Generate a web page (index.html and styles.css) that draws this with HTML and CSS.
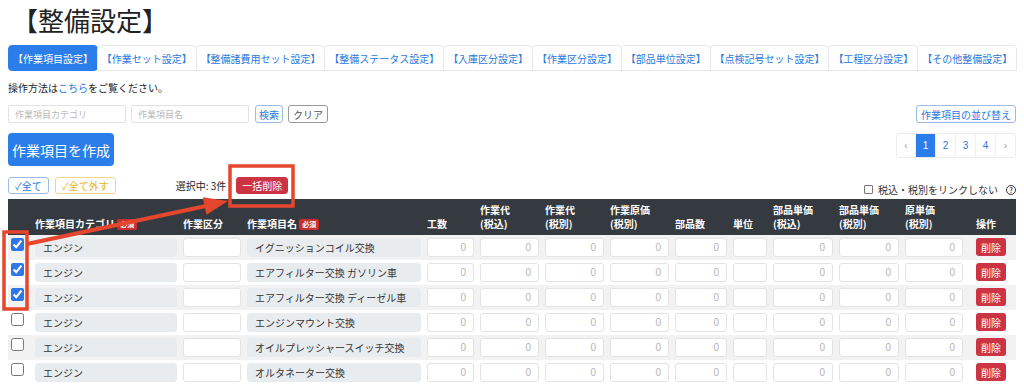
FILE: index.html
```html
<!DOCTYPE html>
<html lang="ja">
<head>
  <meta charset="UTF-8">
  <meta name="viewport" content="width=device-width, initial-scale=1.0">
  <title>整備設定</title>
  <link rel="stylesheet" href="styles.css">
</head>
<body>

  <h1 class="page-title">【整備設定】</h1>

  <nav class="tabs">
    <a href="#" class="tab active">【作業項目設定】</a>
    <a href="#" class="tab">【作業セット設定】</a>
    <a href="#" class="tab">【整備諸費用セット設定】</a>
    <a href="#" class="tab">【整備ステータス設定】</a>
    <a href="#" class="tab">【入庫区分設定】</a>
    <a href="#" class="tab">【作業区分設定】</a>
    <a href="#" class="tab">【部品単位設定】</a>
    <a href="#" class="tab">【点検記号セット設定】</a>
    <a href="#" class="tab">【工程区分設定】</a>
    <a href="#" class="tab">【その他整備設定】</a>
  </nav>

  <p class="help">操作方法は<a href="#">こちら</a>をご覧ください。</p>

  <div class="search-row">
    <div class="search-left">
      <input class="search-input" type="text" placeholder="作業項目カテゴリ">
      <input class="search-input" type="text" placeholder="作業項目名">
      <button class="btn btn-outline-blue">検索</button>
      <button class="btn btn-outline-gray">クリア</button>
    </div>
    <button class="btn btn-outline-blue">作業項目の並び替え</button>
  </div>

  <div class="create-row">
    <button class="btn-create">作業項目を作成</button>
    <ul class="pagination">
      <li>‹</li>
      <li class="current">1</li>
      <li>2</li>
      <li>3</li>
      <li>4</li>
      <li>›</li>
    </ul>
  </div>

  <div class="select-row">
    <div class="select-left">
      <button class="btn btn-outline-blue wide">✓全て</button>
      <button class="btn btn-outline-yellow wide">✓全て外す</button>
      <span class="selected-count">選択中: 3件</span>
      <button class="btn btn-red">一括削除</button>
    </div>
    <label class="link-toggle">
      <span class="small-box"></span>税込・税別をリンクしない
      <span class="help-icon">?</span>
    </label>
  </div>

  <table class="items">
    <colgroup>
      <col style="width:24px"><col style="width:148px"><col style="width:64px">
      <col style="width:180px"><col style="width:53px"><col style="width:65px">
      <col style="width:65px"><col style="width:65px"><col style="width:58px">
      <col style="width:40px"><col style="width:66px"><col style="width:66px">
      <col style="width:64px"><col style="width:50px">
    </colgroup>
    <thead>
      <tr>
        <th></th>
        <th>作業項目カテゴリ <span class="badge">必須</span></th>
        <th>作業区分</th>
        <th>作業項目名 <span class="badge">必須</span></th>
        <th>工数</th>
        <th>作業代<br>(税込)</th>
        <th>作業代<br>(税別)</th>
        <th>作業原価<br>(税別)</th>
        <th>部品数</th>
        <th>単位</th>
        <th>部品単価<br>(税込)</th>
        <th>部品単価<br>(税別)</th>
        <th>原単価<br>(税別)</th>
        <th class="ops">操作</th>
      </tr>
    </thead>
    <tbody id="item-rows"></tbody>
  </table>

  <!-- annotation overlay -->
  <svg class="annotation" width="1024" height="387" viewBox="0 0 1024 387">
    <rect x="230" y="166" width="63" height="40" fill="none" stroke="#e5462d" stroke-width="3.5"/>
    <rect x="4" y="232" width="23" height="77" fill="none" stroke="#e5462d" stroke-width="3.5"/>
    <line x1="27" y1="244" x2="206" y2="206" stroke="#e5462d" stroke-width="4"/>
    <polygon points="228,201 206.5,214.8 202.7,197.2" fill="#e5462d"/>
  </svg>

  <script>
    const items = [
      { category: 'エンジン', name: 'イグニッションコイル交換', checked: true },
      { category: 'エンジン', name: 'エアフィルター交換 ガソリン車', checked: true },
      { category: 'エンジン', name: 'エアフィルター交換 ディーゼル車', checked: true },
      { category: 'エンジン', name: 'エンジンマウント交換', checked: false },
      { category: 'エンジン', name: 'オイルプレッシャースイッチ交換', checked: false },
      { category: 'エンジン', name: 'オルタネーター交換', checked: false }
    ];

    function renderRows() {
      const tbody = document.getElementById('item-rows');
      const num = '<td><input class="cell-input num" type="text" value="0"></td>';
      items.forEach(item => {
        const tr = document.createElement('tr');
        tr.innerHTML =
          `<td><input class="row-check" type="checkbox" ${item.checked ? 'checked' : ''}></td>` +
          `<td><input class="cell-input readonly" type="text" value="${item.category}" readonly></td>` +
          `<td><input class="cell-input" type="text"></td>` +
          `<td><input class="cell-input readonly" type="text" value="${item.name}" readonly></td>` +
          num + num + num + num + num +
          `<td><input class="cell-input" type="text"></td>` +
          num + num + num +
          `<td class="ops"><button class="btn-delete">削除</button></td>`;
        tbody.appendChild(tr);
      });
    }

    renderRows();
  </script>

</body>
</html>
```

FILE: styles.css
```css
* {
  margin: 0;
  padding: 0;
  box-sizing: border-box;
}

body {
  position: relative;
  padding: 4px 8px 0;
  font-family: 'Liberation Sans', 'Noto Sans CJK JP', sans-serif;
  font-size: 10px;
  color: #212529;
  background: #fff;
  overflow: hidden;
}

a {
  color: #2878e0;
  text-decoration: none;
}

.page-title {
  font-family: 'Noto Sans CJK JP', sans-serif;
  font-size: 26px;
  font-weight: normal;
  line-height: 32px;
  padding-left: 4px;
  color: #222;
}

/* tabs */
.tabs {
  display: flex;
  margin-top: 9px;
  height: 26px;
}

.tab {
  display: flex;
  align-items: center;
  padding: 0 4px;
  font-family: 'Noto Sans CJK JP', sans-serif;
  font-size: 10px;
  color: #2878e0;
  border: 1px solid #e8e8e8;
  border-radius: 4px 4px 0 0;
  margin-right: -1px;
}

.tab.active {
  background-color: #2b7de9;
  border-color: #2b7de9;
  color: #fff;
  border-radius: 4px;
}

.help {
  margin-top: 10px;
  line-height: 14px;
  font-family: 'Noto Sans CJK JP', sans-serif;
}

/* buttons */
.btn {
  height: 18px;
  padding: 0 4px;
  font-family: 'Noto Sans CJK JP', sans-serif;
  font-size: 10px;
  background: #fff;
  border: 1px solid;
  border-radius: 3px;
  cursor: pointer;
}

.btn.wide {
  padding: 0 6px;
}

.btn-outline-blue {
  color: #2878e0;
  border-color: #9cbbe6;
}

.btn-outline-gray {
  color: #555;
  border-color: #999;
}

.btn-outline-yellow {
  color: #e8b320;
  border-color: #f1d68a;
}

.btn-red {
  color: #fff;
  background-color: #cc3443;
  border-color: #cc3443;
  height: 17px;
  padding: 0 5px;
}

/* search */
.search-row {
  display: flex;
  justify-content: space-between;
  align-items: center;
  margin-top: 10px;
}

.search-left {
  display: flex;
  gap: 5px;
  align-items: center;
}

.search-input {
  width: 118px;
  height: 18px;
  padding: 0 6px;
  border: 1px solid #e2e2e2;
  border-radius: 2px;
  font-family: 'Noto Sans CJK JP', sans-serif;
  font-size: 9px;
}

.search-input::placeholder {
  color: #b9b9b9;
}

.search-left .btn-outline-blue {
  margin-left: 1px;
  padding: 0 3px;
}

/* create + paging */
.create-row {
  display: flex;
  justify-content: space-between;
  align-items: flex-start;
  margin-top: 10px;
}

.btn-create {
  width: 106px;
  height: 33px;
  background-color: #2b7de9;
  color: #fff;
  border: none;
  border-radius: 4px;
  font-family: 'Noto Sans CJK JP', sans-serif;
  font-size: 14px;
}

.pagination {
  display: flex;
  list-style: none;
  border: 1px solid #ececec;
  border-radius: 3px;
}

.pagination li {
  width: 20px;
  height: 23px;
  line-height: 23px;
  text-align: center;
  color: #2878e0;
  font-size: 10px;
  border-left: 1px solid #f0f0f0;
}

.pagination li:first-child {
  border-left: none;
  color: #999;
  width: 18px;
}

.pagination li:last-child {
  color: #999;
}

.pagination li.current {
  background-color: #2b7de9;
  color: #fff;
}

/* select row */
.select-row {
  display: flex;
  justify-content: space-between;
  align-items: center;
  margin-top: 11px;
  height: 17px;
}

.select-left {
  display: flex;
  align-items: center;
  gap: 6px;
}

.select-left .btn {
  height: 17px;
}

.selected-count {
  margin-left: 54px;
  margin-right: 4px;
  font-family: 'Noto Sans CJK JP', sans-serif;
}

.link-toggle {
  display: flex;
  align-items: center;
  gap: 3px;
  font-family: 'Noto Sans CJK JP', sans-serif;
  padding-top: 8px;
  color: #333;
}

.small-box {
  width: 9px;
  height: 9px;
  border: 1px solid #777;
  border-radius: 1px;
  margin-right: 2px;
}

.help-icon {
  width: 10px;
  height: 10px;
  margin-left: 5px;
  border: 1px solid #333;
  border-radius: 50%;
  font-size: 7px;
  font-weight: bold;
  line-height: 8px;
  text-align: center;
}

/* table */
.items {
  width: 1008px;
  margin-top: 5px;
  table-layout: fixed;
  border-collapse: collapse;
  font-family: 'Noto Sans CJK JP', sans-serif;
}

.items th {
  height: 36px;
  padding: 0 3px 4px;
  background-color: #343a40;
  color: #fff;
  font-size: 10px;
  font-weight: bold;
  line-height: 14px;
  text-align: left;
  vertical-align: bottom;
  white-space: nowrap;
}

.items th.ops,
.items td.ops {
  padding-left: 10px;
}

.badge {
  display: inline-block;
  padding: 0 3px;
  background-color: #c9302c;
  color: #fff;
  font-size: 7px;
  line-height: 11px;
  border-radius: 2px;
  vertical-align: 1px;
}

.items td {
  padding: 3px;
  height: 25px;
  vertical-align: top;
}

.items tbody tr:nth-child(odd) td {
  background-color: #f2f2f2;
}

.row-check {
  display: block;
  width: 13px;
  height: 13px;
  margin: 0;
  accent-color: #2f76e8;
}

.cell-input {
  display: block;
  width: 100%;
  height: 19px;
  padding: 0 7px;
  border: 1px solid #e3e3e3;
  border-radius: 3px;
  background: #fff;
  font-family: 'Noto Sans CJK JP', sans-serif;
  font-size: 10px;
  color: #333;
}

.cell-input.readonly {
  background-color: #e9ecef;
  border-color: #e9ecef;
}

.cell-input.num {
  text-align: right;
  color: #b5b5b5;
  font-family: 'Liberation Sans', sans-serif;
}

.btn-delete {
  display: block;
  width: 30px;
  height: 18px;
  background-color: #cc3443;
  color: #fff;
  border: none;
  border-radius: 3px;
  font-family: 'Noto Sans CJK JP', sans-serif;
  font-size: 10px;
}

/* red annotation drawn over the screen */
.annotation {
  position: absolute;
  top: 0;
  left: 0;
  pointer-events: none;
}
```
